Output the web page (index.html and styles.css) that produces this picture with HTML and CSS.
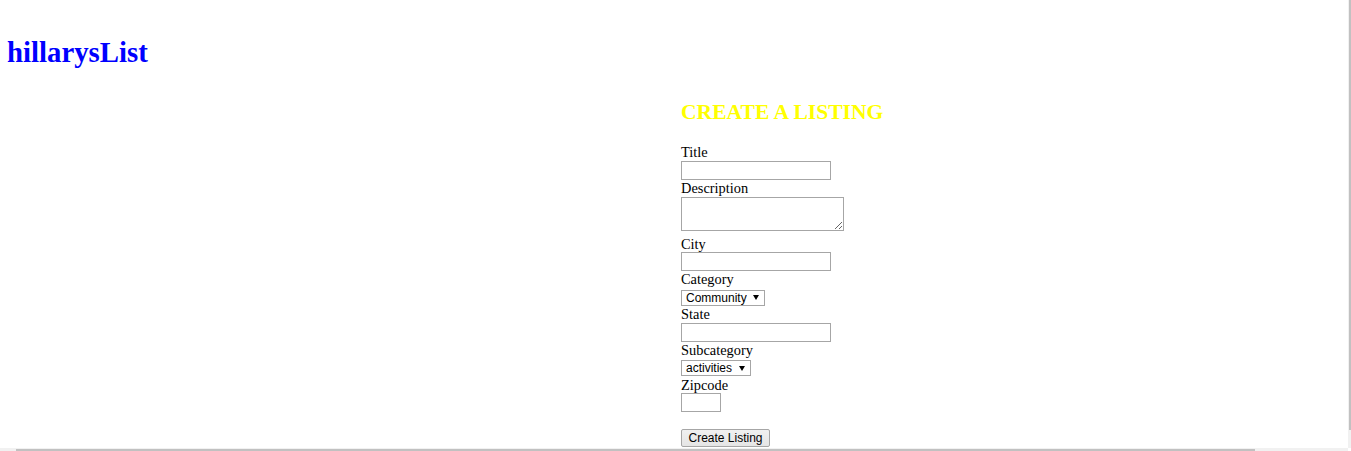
FILE: index.html
```html
<!DOCTYPE html>
<html lang="en">
<head>
<meta charset="utf-8">
<title>hillarysList</title>
<link rel="stylesheet" href="styles.css">
</head>
<body>
<header class="site-header">
  <h1 class="brand">hillarysList</h1>
</header>
<main class="page">
  <section class="listing">
    <h2 class="listing-title">CREATE A LISTING</h2>
    <form class="listing-form">
      <label class="field-label" for="title">Title</label>
      <input class="text-input" id="title" type="text">
      <label class="field-label" for="description">Description</label>
      <textarea class="text-area" id="description"></textarea>
      <label class="field-label" for="city">City</label>
      <input class="text-input" id="city" type="text">
      <label class="field-label" for="category">Category</label>
      <span class="select-box">
        <select class="select" id="category"><option>Community</option></select>
      </span>
      <label class="field-label" for="state">State</label>
      <input class="text-input" id="state" type="text">
      <label class="field-label" for="subcategory">Subcategory</label>
      <span class="select-box">
        <select class="select" id="subcategory"><option>activities</option></select>
      </span>
      <label class="field-label" for="zipcode">Zipcode</label>
      <input class="text-input text-input--zip" id="zipcode" type="text">
      <button class="submit" type="button">Create Listing</button>
    </form>
  </section>
</main>
<div class="scrollbar-v"><div class="scrollbar-v__thumb"></div></div>
<div class="scrollbar-h"><div class="scrollbar-h__thumb"></div></div>
</body>
</html>
```
FILE: styles.css
```css
html, body {
  margin: 0;
  padding: 0;
  background: #ffffff;
}

body {
  font-family: "Liberation Serif", "Times New Roman", serif;
  color: #000000;
  overflow: hidden;
}

.site-header {
  padding: 36px 0 0 7px;
}

.brand {
  margin: 0;
  font-size: 28.8px;
  line-height: 33px;
  font-weight: 700;
  color: #0000ff;
}

.page {
  padding-left: 681px;
}

.listing-title {
  margin: 31px 0 19px;
  font-size: 21.6px;
  line-height: 25px;
  font-weight: 700;
  color: #ffff00;
}

.listing-form {
  display: flex;
  flex-direction: column;
  align-items: flex-start;
}

.field-label {
  display: block;
  font-size: 14.4px;
  line-height: 16.5px;
  height: 16.5px;
}

.text-input {
  display: block;
  box-sizing: border-box;
  width: 150px;
  height: 19px;
  margin: 0;
  padding: 0 2px;
  border: 1px solid #a6a6a6;
  background: #ffffff;
  font: 12px "Liberation Sans", Arial, sans-serif;
  outline: none;
}

.text-input--zip {
  width: 40px;
}

.text-area {
  display: block;
  box-sizing: border-box;
  width: 163px;
  height: 34px;
  margin: 1px 0 4.5px;
  padding: 2px;
  border: 1px solid #a6a6a6;
  background: #ffffff;
  font: 12px "Liberation Mono", monospace;
  outline: none;
}

.select-box {
  position: relative;
  display: block;
  margin: 2px 0 0.5px;
}

.select-box::after {
  content: "";
  position: absolute;
  right: 6px;
  top: 5.5px;
  border-left: 3px solid transparent;
  border-right: 3px solid transparent;
  border-top: 5px solid #000000;
  pointer-events: none;
}

.select {
  display: block;
  box-sizing: border-box;
  height: 16px;
  margin: 0;
  padding: 0 17px 0 4px;
  border: 1px solid #a6a6a6;
  border-radius: 0;
  background: #ffffff;
  color: #000000;
  font: 12px/14px "Liberation Sans", Arial, sans-serif;
  -webkit-appearance: none;
  appearance: none;
  outline: none;
}

.submit {
  display: block;
  box-sizing: border-box;
  width: 89px;
  height: 18px;
  margin: 17px 0 0;
  padding: 0;
  border: 1px solid #a6a6a6;
  border-radius: 2px;
  background: linear-gradient(#f0f0f0, #e5e5e5);
  color: #000000;
  font: 12px/16px "Liberation Sans", Arial, sans-serif;
}

.scrollbar-v {
  position: fixed;
  top: 0;
  right: 0;
  width: 3px;
  height: 448px;
  background: #f1f1f1;
}

.scrollbar-v__thumb {
  width: 2px;
  height: 430px;
  margin-left: 1px;
  background: #c1c1c1;
}

.scrollbar-h {
  position: fixed;
  left: 0;
  bottom: 0;
  width: 1348px;
  height: 3px;
  background: #f1f1f1;
}

.scrollbar-h__thumb {
  width: 1239px;
  height: 2px;
  margin: 1px 0 0 16px;
  background: #c1c1c1;
}
```
